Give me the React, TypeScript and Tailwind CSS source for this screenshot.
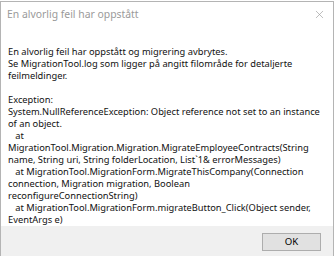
import { X } from "lucide-react";

const lines = [
  "En alvorlig feil har oppstått og migrering avbrytes.",
  "Se MigrationTool.log som ligger på angitt filområde for detaljerte",
  "feilmeldinger.",
  "",
  "Exception:",
  "System.NullReferenceException: Object reference not set to an instance",
  "of an object.",
  "   at",
  "MigrationTool.Migration.Migration.MigrateEmployeeContracts(String",
  "name, String uri, String folderLocation, List`1& errorMessages)",
  "   at MigrationTool.MigrationForm.MigrateThisCompany(Connection",
  "connection, Migration migration, Boolean",
  "reconfigureConnectionString)",
  "   at MigrationTool.MigrationForm.migrateButton_Click(Object sender,",
  "EventArgs e)",
];

export default function App() {
  return (
    <div
      className="w-[334px] h-[256px] bg-white overflow-hidden flex flex-col border-l border-r border-t border-[#b4b4b4] mt-px"
      style={{ fontFamily: '"Noto Sans", "Liberation Sans", sans-serif' }}
    >
      <div className="h-[28px] flex items-center justify-between pl-[6px] pr-[7px] shrink-0">
        <span className="text-[10.4px] text-[#9a9a9a] -mt-[2px]">En alvorlig feil har oppstått</span>
        <X className="w-[13px] h-[13px] text-[#9a9a9a] -mt-[3px]" strokeWidth={1.2} />
      </div>
      <div className="flex-1 pt-[16px] pl-[7px] text-[9.3px] leading-[12px] text-[#111]">
        {lines.map((l, i) => (
          <div key={i} className="whitespace-pre h-[12px]">
            {l}
          </div>
        ))}
      </div>
      <div className="h-[32px] bg-[#f0f0f0] flex items-center justify-end pr-[12px] shrink-0">
        <button className="w-[59px] h-[18px] bg-[#e1e1e1] border border-[#adadad] text-[9.6px] text-black">
          OK
        </button>
      </div>
    </div>
  );
}
